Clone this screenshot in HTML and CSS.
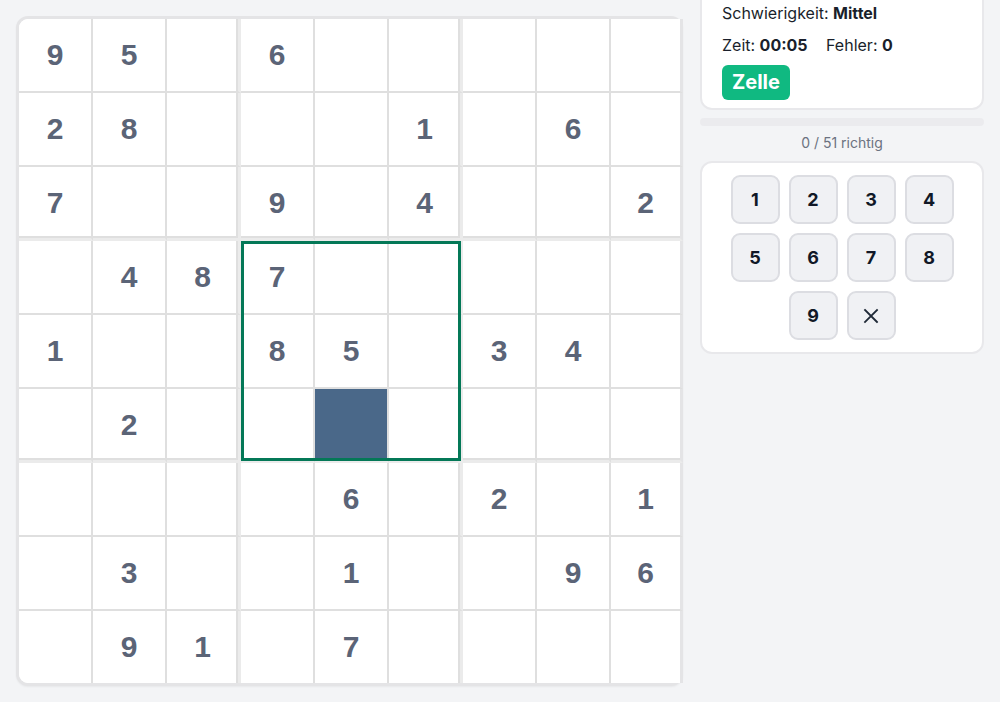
FILE: index.html
```html
<!DOCTYPE html>
<html lang="de">
<head>
<meta charset="utf-8">
<title>Sudoku</title>
<link rel="stylesheet" href="styles.css">
</head>
<body>
<main class="layout">
  <section class="board">
    <div class="grid">
      <div class="cell r1">9</div><div class="cell">5</div><div class="cell vr"></div><div class="cell">6</div><div class="cell"></div><div class="cell vr"></div><div class="cell"></div><div class="cell"></div><div class="cell lc"></div>
      <div class="cell">2</div><div class="cell">8</div><div class="cell vr"></div><div class="cell"></div><div class="cell"></div><div class="cell vr">1</div><div class="cell"></div><div class="cell">6</div><div class="cell lc"></div>
      <div class="cell hb">7</div><div class="cell hb"></div><div class="cell hb vr"></div><div class="cell hb">9</div><div class="cell hb"></div><div class="cell hb vr">4</div><div class="cell hb"></div><div class="cell hb"></div><div class="cell hb lc">2</div>
      <div class="cell"></div><div class="cell">4</div><div class="cell vr">8</div><div class="cell">7</div><div class="cell"></div><div class="cell vr"></div><div class="cell"></div><div class="cell"></div><div class="cell lc"></div>
      <div class="cell">1</div><div class="cell"></div><div class="cell vr"></div><div class="cell">8</div><div class="cell">5</div><div class="cell vr"></div><div class="cell">3</div><div class="cell">4</div><div class="cell lc"></div>
      <div class="cell hb"></div><div class="cell hb">2</div><div class="cell hb vr"></div><div class="cell hb"></div><div class="cell hb selected"></div><div class="cell hb vr"></div><div class="cell hb"></div><div class="cell hb"></div><div class="cell hb lc"></div>
      <div class="cell"></div><div class="cell"></div><div class="cell vr"></div><div class="cell"></div><div class="cell">6</div><div class="cell vr"></div><div class="cell">2</div><div class="cell"></div><div class="cell lc">1</div>
      <div class="cell"></div><div class="cell">3</div><div class="cell vr"></div><div class="cell"></div><div class="cell">1</div><div class="cell vr"></div><div class="cell"></div><div class="cell">9</div><div class="cell lc">6</div>
      <div class="cell lr r9"></div><div class="cell lr">9</div><div class="cell lr vr">1</div><div class="cell lr"></div><div class="cell lr">7</div><div class="cell lr vr"></div><div class="cell lr"></div><div class="cell lr"></div><div class="cell lr lc"></div>
      <div class="box-focus"></div>
    </div>
  </section>

  <aside class="side">
    <div class="card stats">
      <div class="stat-row">Schwierigkeit: <b>Mittel</b></div>
      <div class="stat-row">
        <span class="stat">Zeit: <b>00:05</b></span>
        <span class="stat">Fehler: <b>0</b></span>
      </div>
      <span class="badge">Zelle</span>
    </div>
    <div class="progress"><div class="progress-fill" style="width:0%"></div></div>
    <div class="progress-label">0 / 51 richtig</div>
    <div class="card pad-card">
      <div class="keypad">
        <button class="key">1</button>
        <button class="key">2</button>
        <button class="key">3</button>
        <button class="key">4</button>
        <button class="key">5</button>
        <button class="key">6</button>
        <button class="key">7</button>
        <button class="key">8</button>
        <button class="key">9</button>
        <button class="key" aria-label="Löschen">
          <svg width="16" height="16" viewBox="0 0 16 16" aria-hidden="true"><path d="M2 2 L14 14 M14 2 L2 14" stroke="#1f2937" stroke-width="1.8" stroke-linecap="square" fill="none"/></svg>
        </button>
      </div>
    </div>
  </aside>
</main>
</body>
</html>
```

FILE: styles.css
```css
* { box-sizing: border-box; }

html, body {
  margin: 0;
  background: #f3f4f6;
}

body {
  font-family: Inter, "Noto Sans", "Liberation Sans", sans-serif;
  color: #1f2937;
  overflow: hidden;
}

.layout {
  display: flex;
  align-items: flex-start;
  gap: 17px;
  padding: 16px;
}

.board {
  flex: none;
  width: 667px;
  height: 670px;
  border: 3px solid #e4e4e6;
  border-radius: 12px;
  background: #fff;
  box-shadow: 0 1px 2px rgba(0, 0, 0, 0.05);
}

.grid {
  position: relative;
  width: 664px;
  height: 664px;
  display: grid;
  grid-template-columns: repeat(8, 74px) 72px;
  grid-template-rows: repeat(8, 74px) 72px;
}

.cell {
  display: flex;
  align-items: center;
  justify-content: center;
  background: #fff;
  border-right: 2px solid #dfdfdf;
  border-bottom: 2px solid #dfdfdf;
  font-family: "Liberation Sans", Arial, sans-serif;
  font-weight: 700;
  font-size: 30px;
  color: #5b6477;
}

.cell.vr {
  border-right: 3px solid #ebebeb;
  box-shadow: inset -2px 0 0 #dfdfdf;
}

.cell.hb {
  border-bottom: 3px solid #ebebeb;
  box-shadow: inset 0 -2px 0 #dfdfdf;
}

.cell.hb.vr {
  box-shadow: inset -2px -2px 0 #dfdfdf;
}

.cell.lc {
  border-right: 3px solid #e4e4e6;
}

.cell.lr {
  border-bottom: none;
}

.cell.r1 { border-top-left-radius: 9px; }
.cell.r9 { border-bottom-left-radius: 9px; }

.cell.selected {
  background: #4a6889;
}

.box-focus {
  position: absolute;
  left: 222px;
  top: 222px;
  width: 220px;
  height: 220px;
  border: 3px solid #047857;
  pointer-events: none;
}

.side {
  flex: none;
  width: 284px;
  margin-top: -36px;
  display: flex;
  flex-direction: column;
}

.card {
  background: #fff;
  border: 2px solid #e8e8eb;
  border-radius: 12px;
}

.stats {
  padding: 19px 20px 8px;
}

.stat-row {
  font-size: 16px;
  line-height: 24px;
  margin-bottom: 8px;
  color: #1a1f2b;
}

.stat-row b {
  font-weight: 700;
}

.stat + .stat {
  margin-left: 14px;
}

.badge {
  display: inline-block;
  height: 35px;
  line-height: 35px;
  padding: 0 10px;
  border-radius: 6px;
  background: #10b981;
  color: #fff;
  font-weight: 700;
  font-size: 20px;
}

.progress {
  margin-top: 8px;
  height: 8px;
  border-radius: 4px;
  background: #ebebee;
  overflow: hidden;
}

.progress-fill {
  height: 100%;
  background: #10b981;
}

.progress-label {
  margin-top: 7px;
  text-align: center;
  font-size: 14px;
  line-height: 20px;
  color: #6b7280;
}

.pad-card {
  margin-top: 8px;
  padding: 12px;
}

.keypad {
  width: 223px;
  margin: 0 auto;
  display: flex;
  flex-wrap: wrap;
  justify-content: center;
  gap: 9px;
}

.key {
  width: 49px;
  height: 49px;
  padding: 0;
  display: flex;
  align-items: center;
  justify-content: center;
  background: #f0f1f4;
  border: 2px solid #dcdde2;
  border-radius: 9px;
  font-family: Inter, "Noto Sans", "Liberation Sans", sans-serif;
  font-weight: 700;
  font-size: 18px;
  color: #111827;
}
```
